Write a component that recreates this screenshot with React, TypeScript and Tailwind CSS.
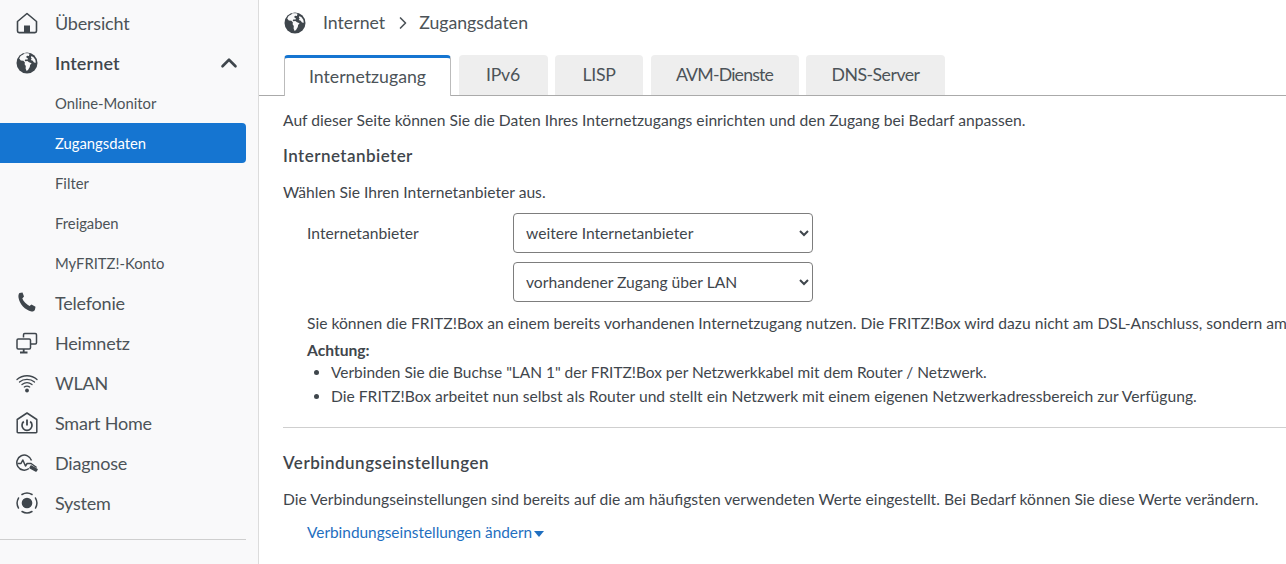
import { ChevronUp, ChevronRight } from 'lucide-react';
import type { ReactNode } from 'react';

const dark = '#3f464c';

function HomeIcon() {
    return (
        <svg width="22" height="22" viewBox="0 0 22 22" fill="none" stroke={dark} strokeWidth="1.6">
            <path d="M1.5 9.5 11 1.5l9.5 8V19a1.6 1.6 0 0 1-1.6 1.6H3.1A1.6 1.6 0 0 1 1.5 19z" strokeLinejoin="round" />
            <rect x="8" y="13.5" width="6" height="7" fill={dark} stroke="none" />
        </svg>
    );
}

function GlobeIcon({ size = 22 }: { size?: number }) {
    return (
        <svg width={size} height={size} viewBox="0 0 22 22">
            <circle cx="11" cy="11" r="10.5" fill={dark} />
            <path d="M8 1.6c-.6 1.5-2.5 1.7-3.6 2.6L3.2 6.6l1.6 1.8 2.6.3 1.5 1.8-.3 1.8 1.2 1.8-.2 2.4 1 2.6 1.4-1.2 1.8-2.8.3-2.2 1.5-1.7-2.6-.9-1.6-1.2-2.1.2-.6-1.1 1.2-1 1.2.5 1-.9L10 4.9l1.2-1.1 1.7.3.6-2.3C11.800 1.200 9.500 1.200 8 1.600z" fill="#f9f9fa" />
            <path d="m15.500 4 2.300 1.500 1.600 2.500.4 2.800-1.800-.4-1.200-1.700-2-.8.9-1.400-.8-1z" fill="#f9f9fa" />
        </svg>
    );
}

function PhoneIcon() {
    return (
        <svg width="22" height="22" viewBox="0 0 22 22" fill={dark}>
            <path d="M3.500 1 6.500.5 8 4.500 6.300 6.500c1.200 3 4.200 6 7.200 7.500l2-1.500 4 2.300-.5 2.700c-.5 1.500-2 2.200-3.500 2C9 18 3.500 12 2.500 5.500c-.2-2 0-3.500 1-4.500z" />
        </svg>
    );
}

function NetworkIcon() {
    return (
        <svg width="22" height="22" viewBox="0 0 22 22" fill="none" stroke={dark} strokeWidth="1.5">
            <path d="M7.500 5.500V2.800c0-.7.500-1.200 1.200-1.200h10.600c.7 0 1.200.5 1.200 1.200v8c0 .7-.5 1.200-1.200 1.200h-5" />
            <rect x="1" y="7" width="13.500" height="10" rx="1.200" fill="#f9f9fa" />
            <path d="M7.700 17v3M4 20.500h7.500" strokeWidth="1.800" />
        </svg>
    );
}

function WifiIcon() {
    return (
        <svg width="22" height="22" viewBox="0 0 22 22" fill="none" stroke={dark} strokeWidth="1.300" strokeLinecap="round">
            <path d="M1 7.500C6.500 2.500 15.500 2.500 21 7.500" />
            <path d="M3.500 10C7.500 6.500 14.500 6.500 18.500 10" />
            <path d="M6 12.500c3-2.300 7-2.300 10 0" />
            <path d="M8.300 15c1.600-1.100 3.800-1.100 5.400 0" />
            <circle cx="11" cy="18.500" r="1.900" fill={dark} stroke="none" />
        </svg>
    );
}

function SmartHomeIcon() {
    return (
        <svg width="22" height="22" viewBox="0 0 22 22" fill="none" stroke={dark} strokeWidth="1.500">
            <path d="M1.200 7.500 11 1l9.800 6.500V20a.8.8 0 0 1-.8.800H2a.8.8 0 0 1-.8-.8z" strokeLinejoin="round" />
            <path d="M7.800 9.500a5 5 0 1 0 6.400 0" strokeWidth="1.700" />
            <path d="M11 7.500v6" strokeWidth="1.800" />
        </svg>
    );
}

function DiagnoseIcon() {
    return (
        <svg width="22" height="22" viewBox="0 0 22 22" fill="none" stroke={dark} strokeWidth="1.500" strokeLinejoin="round">
            <path d="M15.500 8.500A7.500 7.500 0 1 0 13 16.500" />
            <path d="M1.500 11.500H5l1.800-3.500 2.700 6 1.600-2.500h4l5.500 4" />
            <path d="m15 14 6 3.500-1 1.500-6-3.200z" fill={dark} />
        </svg>
    );
}

function SystemIcon() {
    return (
        <svg width="22" height="22" viewBox="0 0 22 22" fill="none" stroke={dark} strokeWidth="1.500" strokeLinecap="round">
            <path d="M6 2.500a10 10 0 0 1 10 0M19.500 6a10 10 0 0 1 0 10M16 19.500a10 10 0 0 1-10 0M2.500 16a10 10 0 0 1 0-10" />
            <circle cx="11" cy="11" r="5.300" fill={dark} stroke="none" />
        </svg>
    );
}

function NavItem({ icon, label }: { icon: ReactNode; label: string }) {
    return (
        <div className="h-10 flex items-center">
            <span className="w-[55px] pl-[16px] shrink-0 flex items-center">{icon}</span>
            <span className="-mt-px text-[18px] tracking-[-0.2px] text-[#4c5358]">{label}</span>
        </div>
    );
}

function SubItem({ label, active = false }: { label: string; active?: boolean }) {
    return (
        <div className={`h-10 w-[246px] flex items-center pl-[55px] text-[14.8px] ${active ? 'bg-[#1575d1] text-white rounded-r' : 'text-[#4c5358]'}`}>
            {label}
        </div>
    );
}

const tabs = [
    { label: 'IPv6', width: 'w-[89px]', text: 'tracking-[-0.2px]' },
    { label: 'LISP', width: 'w-[88px]', text: 'tracking-[-0.3px]' },
    { label: 'AVM-Dienste', width: 'w-[148px]', text: 'tracking-[-0.8px]' },
    { label: 'DNS-Server', width: 'w-[139px]', text: 'tracking-[-0.5px]' },
];

export default function App() {
    return (
        <div className="flex h-[564px] w-[1286px] overflow-hidden bg-white text-[15.65px] leading-6 text-[#3f464c] font-['Lato','Noto_Sans',sans-serif]">
            <aside className="w-[259px] shrink-0 h-full bg-[#f9f9fa] border-r border-[#dcdcdc] pt-[3px]">
                <NavItem icon={<HomeIcon />} label="Übersicht" />
                <div className="h-10 flex items-center w-[246px]">
                    <span className="w-[55px] pl-[16px] shrink-0 flex items-center"><GlobeIcon /></span>
                    <span className="-mt-px text-[18px] font-semibold tracking-[0.1px] text-[#3f464c]">Internet</span>
                    <ChevronUp className="ml-auto mr-[4px] w-[26px] h-[26px] text-[#3f464c]" strokeWidth={2.4} />
                </div>
                <SubItem label="Online-Monitor" />
                <SubItem label="Zugangsdaten" active />
                <SubItem label="Filter" />
                <SubItem label="Freigaben" />
                <SubItem label="MyFRITZ!-Konto" />
                <NavItem icon={<PhoneIcon />} label="Telefonie" />
                <NavItem icon={<NetworkIcon />} label="Heimnetz" />
                <NavItem icon={<WifiIcon />} label="WLAN" />
                <NavItem icon={<SmartHomeIcon />} label="Smart Home" />
                <NavItem icon={<DiagnoseIcon />} label="Diagnose" />
                <NavItem icon={<SystemIcon />} label="System" />
                <div className="mt-[16px] w-[246px] border-t border-[#cfcfcf]" />
            </aside>

            <main className="flex-1 min-w-0 overflow-hidden whitespace-nowrap">
                <div className="h-[46px] flex items-center pl-[25px] text-[17.7px] text-[#4c5358]">
                    <GlobeIcon />
                    <span className="ml-[17px] -mt-px">Internet</span>
                    <ChevronRight className="ml-[8px] mr-[6px] w-[20px] h-[20px]" strokeWidth={2} />
                    <span className="-mt-px">Zugangsdaten</span>
                </div>

                <div className="mt-[9px] h-[41px] flex items-end gap-[7.500px] pl-[25px] border-b border-[#aaaaaa]">
                    <div className="w-[167px] h-[41px] -mb-px bg-white border-x border-[#bbbbbb] border-t-[3px] border-t-[#1575d1] rounded-t flex items-center justify-center text-[17.7px] text-[#4c5358]">
                        Internetzugang
                    </div>
                    {tabs.map((tab) => (
                        <div key={tab.label} className={`${tab.width} ${tab.text} h-[40px] bg-[#eeeeee] rounded-t flex items-center justify-center text-[17.7px] text-[#4c5358]`}>
                            {tab.label}
                        </div>
                    ))}
                </div>

                <div className="pl-[24px]">
                    <p className="mt-[12px]">Auf dieser Seite können Sie die Daten Ihres Internetzugangs einrichten und den Zugang bei Bedarf anpassen.</p>
                    <h2 className="mt-[12px] text-[17px] font-semibold tracking-[0.45px]">Internetanbieter</h2>
                    <p className="mt-[12px]">Wählen Sie Ihren Internetanbieter aus.</p>

                    <div className="mt-[9px] flex pl-[24px]">
                        <label className="w-[206px] h-10 flex items-center">Internetanbieter</label>
                        <div className="flex flex-col gap-[9px]">
                            <select className="w-[300px] h-10 pl-[8px] border border-[#7d7d7d] rounded bg-white text-[15.65px]" defaultValue="a">
                                <option value="a">weitere Internetanbieter</option>
                            </select>
                            <select className="w-[300px] h-10 pl-[8px] border border-[#7d7d7d] rounded bg-white text-[15.65px]" defaultValue="b">
                                <option value="b">vorhandener Zugang über LAN</option>
                            </select>
                        </div>
                    </div>

                    <p className="mt-[9px] pl-[24px]">Sie können die FRITZ!Box an einem bereits vorhandenen Internetzugang nutzen. Die FRITZ!Box wird dazu nicht am DSL-Anschluss, sondern am</p>
                    <p className="mt-[5px] pl-[24px] h-5 leading-5 font-bold">Achtung:</p>
                    <ul className="list-disc pl-[48px]">
                        <li className="text-[15.45px]">Verbinden Sie die Buchse "LAN 1" der FRITZ!Box per Netzwerkkabel mit dem Router / Netzwerk.</li>
                        <li>Die FRITZ!Box arbeitet nun selbst als Router und stellt ein Netzwerk mit einem eigenen Netzwerkadressbereich zur Verfügung.</li>
                    </ul>

                    <div className="mt-[19px] border-t border-[#cfcfcf]" />

                    <h2 className="mt-[23px] text-[17px] font-semibold tracking-[0.5px]">Verbindungseinstellungen</h2>
                    <p className="mt-[12px]">Die Verbindungseinstellungen sind bereits auf die am häufigsten verwendeten Werte eingestellt. Bei Bedarf können Sie diese Werte verändern.</p>
                    <div className="mt-[9px] pl-[24px] flex items-center text-[15.4px] text-[#1f6fc0]">
                        Verbindungseinstellungen ändern
                        <span className="ml-[2px] mt-[3px] border-x-[5px] border-x-transparent border-t-[6px] border-t-[#1f6fc0]" />
                    </div>
                </div>
            </main>
        </div>
    );
}
